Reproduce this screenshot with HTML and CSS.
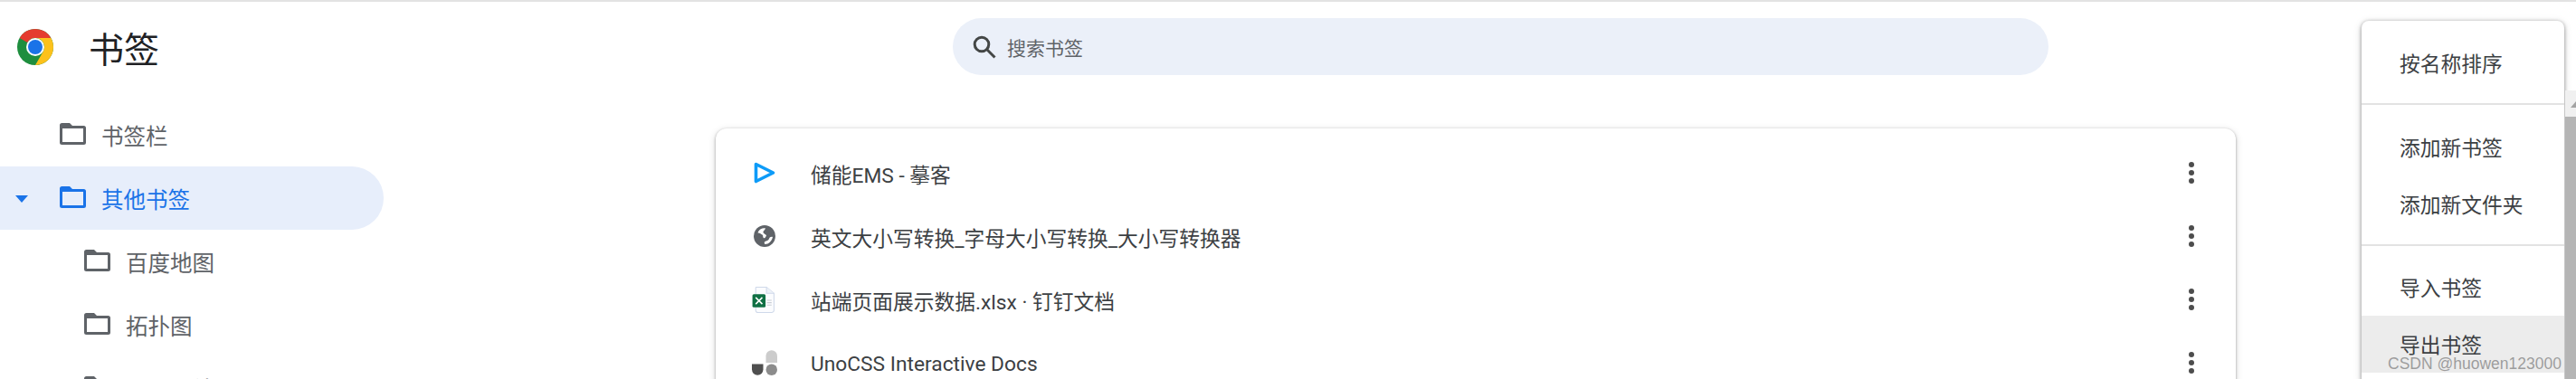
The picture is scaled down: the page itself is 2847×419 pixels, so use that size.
FILE: index.html
```html
<!DOCTYPE html>
<html lang="zh-CN">
<head>
    <meta charset="UTF-8">
    <title>书签</title>
    <link rel="stylesheet" href="styles.css">
</head>
<body>
    <!-- Top bar -->
    <header class="toolbar">
        <div class="brand">
            <svg class="logo" viewBox="0 0 40 40">
                <circle cx="20" cy="20" r="20" fill="#1e8e3e"/>
                <path d="M20 0A20 20 0 0 1 37.3 10H20A10 10 0 0 0 11.3 15L2.7 10A20 20 0 0 1 20 0Z" fill="#e53b2f"/>
                <path d="M37.3 10A20 20 0 0 1 20 40L28.7 25A10 10 0 0 0 20 10Z" fill="#fcc11c"/>
                <circle cx="20" cy="20" r="10" fill="#fff"/>
                <circle cx="20" cy="20" r="8" fill="#1a73e8"/>
            </svg>
            <h1>书签</h1>
        </div>
        <div class="search">
            <svg class="search-icon" viewBox="0 0 26 26">
                <circle cx="10" cy="10" r="7.8" fill="none" stroke="#444746" stroke-width="3"/>
                <path d="M15.8 15.8L24.5 24.5" stroke="#444746" stroke-width="3"/>
            </svg>
            <span>搜索书签</span>
        </div>
    </header>

    <div class="main">
        <!-- Folder tree -->
        <nav class="sidebar">
            <div class="tree-row">
                <svg class="folder" viewBox="0 0 29 24"><use href="#folder-shape"/></svg>
                <span>书签栏</span>
            </div>
            <div class="tree-row selected">
                <span class="caret"></span>
                <svg class="folder" viewBox="0 0 29 24"><use href="#folder-shape"/></svg>
                <span>其他书签</span>
            </div>
            <div class="tree-row child">
                <svg class="folder" viewBox="0 0 29 24"><use href="#folder-shape"/></svg>
                <span>百度地图</span>
            </div>
            <div class="tree-row child">
                <svg class="folder" viewBox="0 0 29 24"><use href="#folder-shape"/></svg>
                <span>拓扑图</span>
            </div>
            <div class="tree-row child">
                <svg class="folder" viewBox="0 0 29 24"><use href="#folder-shape"/></svg>
                <span>工具网站</span>
            </div>
        </nav>

        <!-- Bookmark list -->
        <section class="card">
            <div class="bookmark">
                <svg class="favicon" viewBox="0 0 24 24">
                    <path d="M2.5 2.5L21.500 12L2.5 21.5Z" fill="none" stroke="#0d9bf8" stroke-width="3.6" stroke-linejoin="round"/>
                </svg>
                <span class="title">储能EMS - 摹客</span>
                <span class="more"><i></i><i></i><i></i></span>
            </div>
            <div class="bookmark">
                <svg class="favicon" viewBox="0 0 24 24">
                    <circle cx="12" cy="12" r="12" fill="#5f6368"/>
                    <path d="M13 3.5C9 2.800 5.500 5 4.500 8.500C6.500 8 8 9.500 9.500 10.500C11 11.500 9.500 13 11 14C12.500 15 13 13 14 11.500C13 9.500 10.500 9.500 10.500 7.500C10.500 5.800 12.500 5.500 13 3.500Z" fill="#fff"/>
                    <path d="M21 13C19 12.500 17.500 13.500 17 15C16.300 17 14 17 12.500 18C11.500 18.700 11.500 20 12.500 21C16.500 21 20 17.500 21 13Z" fill="#fff"/>
                </svg>
                <span class="title">英文大小写转换_字母大小写转换_大小写转换器</span>
                <span class="more"><i></i><i></i><i></i></span>
            </div>
            <div class="bookmark">
                <svg class="favicon doc" viewBox="0 0 24 28">
                    <path d="M4.500 0.500H15.500L23.500 7V25A2.500 2.500 0 0 1 21 27.500H6.500A2.500 2.500 0 0 1 4 25V1Z" fill="#fbfcfe" stroke="#cfd9ea"/>
                    <path d="M15.500 0.500V7H23.500" fill="#eef2f8" stroke="#cfd9ea"/>
                    <path d="M16 14.500H21M16 17H21M16 19.500H21" stroke="#c9ced6"/>
                    <rect x="0.500" y="8" width="14" height="14" rx="1.500" fill="#107044"/>
                    <path d="M4 11.500L11 18.500M11 11.500L4 18.500" stroke="#fff" stroke-width="1.500"/>
                </svg>
                <span class="title">站端页面展示数据.xlsx · 钉钉文档</span>
                <span class="more"><i></i><i></i><i></i></span>
            </div>
            <div class="bookmark">
                <svg class="favicon uno" viewBox="0 0 28 28">
                    <path d="M15.500 6.500A6.250 6.250 0 0 1 28 6.500V14H15.500Z" fill="#cccccc"/>
                    <path d="M0 15.500H12.500V21.500A6.250 6.250 0 0 1 0 21.500Z" fill="#4f4f4f"/>
                    <circle cx="21.750" cy="21.750" r="6.250" fill="#8c8c8c"/>
                </svg>
                <span class="title">UnoCSS Interactive Docs</span>
                <span class="more"><i></i><i></i><i></i></span>
            </div>
        </section>
    </div>

    <!-- Sort / import menu, open over the page -->
    <div class="menu">
        <div class="menu-item">按名称排序</div>
        <hr>
        <div class="menu-item">添加新书签</div>
        <div class="menu-item">添加新文件夹</div>
        <hr>
        <div class="menu-item">导入书签</div>
        <div class="menu-item hover">导出书签</div>
    </div>

    <div class="scrollbar">
        <div class="track-top"><span class="arrow"></span></div>
        <div class="thumb"></div>
    </div>

    <div class="watermark">CSDN @huowen123000</div>

    <!-- Folder icon used by the tree -->
    <svg class="defs" width="0" height="0">
        <symbol id="folder-shape" viewBox="0 0 29 24">
            <path d="M2.500 0H11L14 3H26.500A2.500 2.500 0 0 1 29 5.500V21.500A2.500 2.500 0 0 1 26.500 24H2.500A2.500 2.500 0 0 1 0 21.500V2.500A2.500 2.500 0 0 1 2.500 0ZM3 6V21H26V6Z" fill="currentColor" fill-rule="evenodd"/>
        </symbol>
    </svg>
</body>
</html>
```

FILE: styles.css
```css
html {
    height: 100%;
}

body {
    margin: 0;
    height: 419px;
    overflow: hidden;
    position: relative;
    background-color: #ffffff;
    border-top: 2px solid #e3e3e3;
    box-sizing: border-box;
    font-family: Roboto, "Noto Sans CJK SC", sans-serif;
    color: #3c4043;
}

.toolbar {
    display: flex;
    align-items: center;
    height: 63px;
    margin-top: 18px;
}

.brand {
    display: flex;
    align-items: center;
    width: 1053px;
    padding-left: 19px;
    box-sizing: border-box;
}

.logo {
    width: 40px;
    height: 40px;
    margin-right: 39px;
}

h1 {
    margin: 0;
    font-size: 39px;
    font-weight: 400;
    color: #202124;
}

.search {
    display: flex;
    align-items: center;
    width: 1211px;
    height: 63px;
    padding-left: 22px;
    box-sizing: border-box;
    border-radius: 32px;
    background-color: #ebf0f9;
    font-size: 21px;
    color: #5f6368;
}

.search-icon {
    width: 26px;
    height: 26px;
    margin-right: 12px;
}

.main {
    display: flex;
    align-items: flex-start;
}

.sidebar {
    width: 424px;
    margin-top: 31px;
    margin-right: 367px;
    flex-shrink: 0;
}

.tree-row {
    display: flex;
    align-items: center;
    height: 70px;
    padding-left: 66px;
    font-size: 24.5px;
    color: #5f6368;
}

.tree-row.child {
    padding-left: 93px;
}

.tree-row.selected {
    position: relative;
    border-radius: 0 35px 35px 0;
    background-color: #e7eefb;
    color: #1a73e8;
}

.caret {
    position: absolute;
    left: 17px;
    top: 32px;
    border-left: 7.5px solid transparent;
    border-right: 7.5px solid transparent;
    border-top: 8px solid #1a73e8;
}

.folder {
    width: 29px;
    height: 24px;
    margin-right: 17px;
    margin-bottom: 2px;
    flex-shrink: 0;
}

.defs {
    position: absolute;
}

.card {
    width: 1680px;
    margin-top: 59px;
    padding: 14px 0;
    border-radius: 12px;
    background-color: #ffffff;
    box-shadow: 0 1px 3px rgba(0, 0, 0, 0.35), 0 2px 8px rgba(0, 0, 0, 0.15);
}

.bookmark {
    display: flex;
    align-items: center;
    height: 70px;
    padding-left: 42px;
    font-size: 22.75px;
    color: #3c4043;
}

.favicon {
    width: 24px;
    height: 24px;
    margin-right: 39px;
    flex-shrink: 0;
}

.favicon.doc {
    width: 25px;
    height: 29px;
    margin-left: -2px;
    margin-right: 40px;
}

.favicon.uno {
    width: 28px;
    height: 28px;
    margin-left: -2px;
    margin-right: 37px;
}

.title {
    flex: 1;
    padding-top: 2px;
}

.more {
    display: flex;
    flex-direction: column;
    gap: 3px;
    margin-right: 46px;
}

.more i {
    display: block;
    width: 6px;
    height: 6px;
    border-radius: 50%;
    background-color: #4d4d4d;
}

.menu {
    position: absolute;
    left: 2610px;
    top: 21px;
    width: 224px;
    padding: 15px 0;
    border-radius: 8px;
    background-color: #ffffff;
    box-shadow: 0 1px 4px rgba(0, 0, 0, 0.4), 0 2px 10px rgba(0, 0, 0, 0.15);
}

.menu hr {
    height: 2px;
    margin: 13px 0 15px;
    border: none;
    background-color: #e3e3e3;
}

.menu hr:last-of-type {
    margin-bottom: 14px;
}

.menu-item {
    height: 63px;
    line-height: 68px;
    padding-left: 42px;
    font-size: 22.75px;
    color: #3c4043;
}

.menu-item.hover {
    background-color: #ececec;
}

.scrollbar {
    position: absolute;
    left: 2835px;
    top: 98px;
    width: 12px;
    height: 321px;
}

.track-top {
    height: 29px;
    padding-top: 12px;
    padding-left: 6px;
    box-sizing: border-box;
    background-color: #f0f0f0;
}

.arrow {
    display: block;
    width: 0;
    border-left: 6px solid transparent;
    border-bottom: 7px solid #a3a3a3;
}

.thumb {
    height: 292px;
    background-color: #b5b5b5;
}

.watermark {
    position: absolute;
    left: 2639px;
    top: 390px;
    white-space: nowrap;
    font-family: "Liberation Sans", sans-serif;
    font-size: 17.5px;
    color: rgba(130, 130, 130, 0.75);
}
```
